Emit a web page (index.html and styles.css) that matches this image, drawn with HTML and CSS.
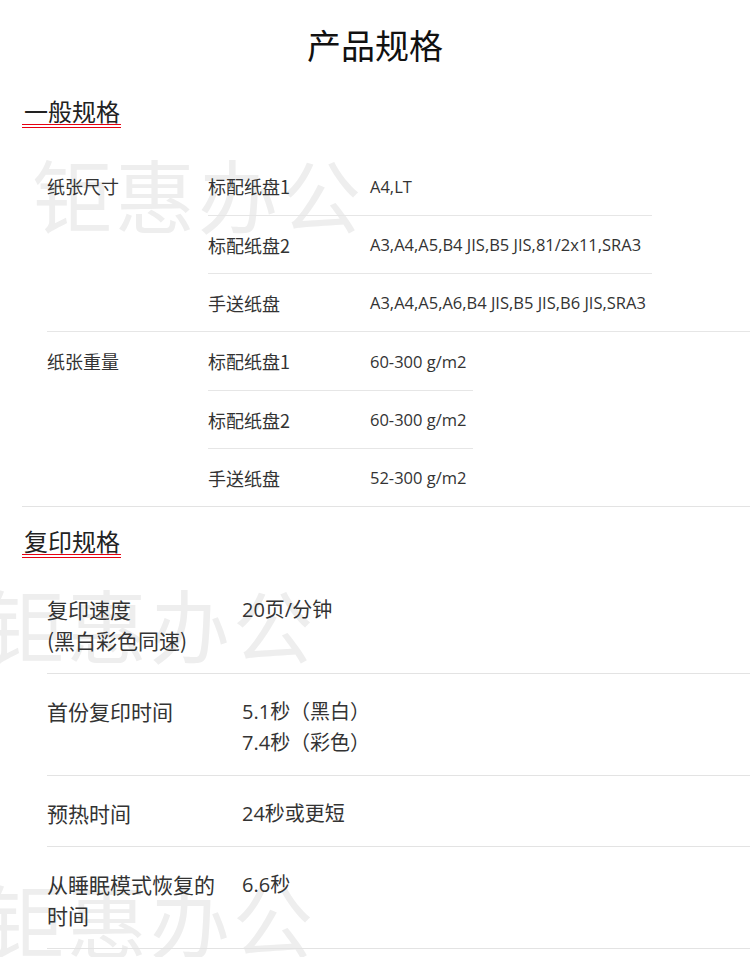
FILE: index.html
```html
<!DOCTYPE html>
<html>
<head>
    <title>产品规格</title>
    <link rel="stylesheet" href="styles.css">
</head>
<body>
    <div class="mark mark-one">钜惠办公</div>
    <div class="mark mark-two">钜惠办公</div>
    <div class="mark mark-three">钜惠办公</div>

    <h1 class="title">产品规格</h1>

    <div class="spec general">
        <h2 class="spec-head"><span>一般规格</span></h2>

        <div class="group first">
            <div class="group-name">纸张尺寸</div>
            <div class="sub">
                <div class="sub-row"><span class="sub-name">标配纸盘1</span><span class="sub-val">A4,LT</span></div>
                <div class="sub-row"><span class="sub-name">标配纸盘2</span><span class="sub-val">A3,A4,A5,B4 JIS,B5 JIS,81/2x11,SRA3</span></div>
                <div class="sub-row"><span class="sub-name">手送纸盘</span><span class="sub-val">A3,A4,A5,A6,B4 JIS,B5 JIS,B6 JIS,SRA3</span></div>
            </div>
        </div>

        <div class="group">
            <div class="group-name">纸张重量</div>
            <div class="sub">
                <div class="sub-row"><span class="sub-name">标配纸盘1</span><span class="sub-val">60-300 g/m2</span></div>
                <div class="sub-row"><span class="sub-name">标配纸盘2</span><span class="sub-val">60-300 g/m2</span></div>
                <div class="sub-row"><span class="sub-name">手送纸盘</span><span class="sub-val">52-300 g/m2</span></div>
            </div>
        </div>
    </div>

    <div class="spec copy">
        <h2 class="spec-head"><span>复印规格</span></h2>

        <div class="copy-list">
            <div class="copy-row">
                <div class="copy-name">复印速度<br>(黑白彩色同速)</div>
                <div class="copy-val">20页/分钟</div>
            </div>
            <div class="copy-row">
                <div class="copy-name">首份复印时间</div>
                <div class="copy-val">5.1秒（黑白）<br>7.4秒（彩色）</div>
            </div>
            <div class="copy-row">
                <div class="copy-name">预热时间</div>
                <div class="copy-val">24秒或更短</div>
            </div>
            <div class="copy-row">
                <div class="copy-name">从睡眠模式恢复的时间</div>
                <div class="copy-val">6.6秒</div>
            </div>
        </div>
    </div>
</body>
</html>
```

FILE: styles.css
```css
body {
    margin: 0;
    background-color: #fff;
    font-family: "Noto Sans CJK SC", sans-serif;
    color: #333;
    overflow: hidden;
}

/* faint watermark text behind the tables */
.mark {
    position: absolute;
    z-index: -1;
    font-size: 80px;
    line-height: 80px;
    letter-spacing: 3px;
    color: #eeeeee;
    white-space: nowrap;
}
.mark-one {
    top: 152px;
    left: 32px;
}
.mark-two {
    top: 582px;
    left: -16px;
}
.mark-three {
    top: 877px;
    left: -16px;
}

.title {
    margin: 23px 0 0;
    font-size: 34px;
    line-height: 44px;
    font-weight: normal;
    text-align: center;
    color: #111;
}

.spec-head {
    margin: 0 0 0 22px;
    font-size: 24px;
    font-weight: normal;
    line-height: 26px;
    color: #222;
}
.spec-head span {
    display: inline-block;
    padding: 0 1px 0 2px;
    border-bottom: 4px double #e60012;
}

.general {
    margin-top: 31px;
    margin-left: 22px;
    border-bottom: 1px solid #e3e3e3;
}
.general .spec-head {
    margin-left: 0;
    margin-bottom: 29px;
}

.group {
    display: flex;
    margin-left: 25px;
}
.group.first {
    border-bottom: 1px solid #e6e6e6;
}
.group-name {
    width: 161px;
    flex-shrink: 0;
    font-size: 18px;
    line-height: 58px;
}

.sub {
    display: inline-flex;
    flex-direction: column;
}
.sub-row {
    display: flex;
    align-items: center;
    height: 58px;
    box-sizing: border-box;
}
.sub-row + .sub-row {
    border-top: 1px solid #e6e6e6;
}
.sub-name {
    width: 162px;
    flex-shrink: 0;
    font-size: 18px;
}
.sub-val {
    font-family: "Open Sans", "Noto Sans CJK SC", sans-serif;
    font-size: 16.5px;
    white-space: nowrap;
    padding-right: 6px;
}

.copy {
    margin-top: 21px;
}
.copy .spec-head {
    margin-bottom: 14px;
}

.copy-list {
    margin-left: 47px;
}
.copy-row {
    display: grid;
    grid-template-columns: 175px 1fr;
    column-gap: 20px;
    padding: 22px 0 17px;
    line-height: 31px;
    border-bottom: 1px solid #e3e3e3;
}
.copy-name {
    font-size: 21px;
}
.copy-val {
    font-family: "Open Sans", "Noto Sans CJK SC", sans-serif;
    font-size: 20px;
}
```
